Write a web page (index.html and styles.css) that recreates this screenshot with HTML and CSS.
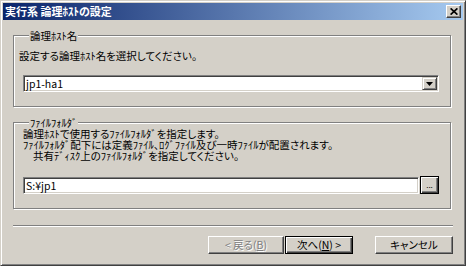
FILE: index.html
```html
<!DOCTYPE html>
<html lang="ja">
<head>
  <meta charset="UTF-8">
  <meta name="viewport" content="width=device-width, initial-scale=1.0">
  <title>実行系 論理ホストの設定</title>
  <link rel="stylesheet" href="styles.css">
</head>
<body>
  <div class="window">
    <div class="titlebar">
      <span class="title">実行系 論理ﾎｽﾄの設定</span>
      <button class="close-btn" aria-label="閉じる">
        <svg width="8" height="7" viewBox="0 0 8 7"><path d="M0.6 0.4L7.4 6.6M7.4 0.4L0.6 6.6" stroke="#000" stroke-width="1.7"/></svg>
      </button>
    </div>

    <div class="content">
      <fieldset class="group group-host">
        <legend>論理ﾎｽﾄ名</legend>
        <p class="desc">設定する論理ﾎｽﾄ名を選択してください。</p>
        <div class="combo">
          <span class="combo-value">jp1-ha1</span>
          <span class="combo-btn">
            <svg width="7" height="4" viewBox="0 0 7 4"><polygon points="0,0 7,0 3.5,4" fill="#000"/></svg>
          </span>
        </div>
      </fieldset>

      <fieldset class="group group-folder">
        <legend>ﾌｧｲﾙﾌｫﾙﾀﾞ</legend>
        <p class="desc">論理ﾎｽﾄで使用するﾌｧｲﾙﾌｫﾙﾀﾞを指定します。<br>ﾌｧｲﾙﾌｫﾙﾀﾞ配下には定義ﾌｧｲﾙ、ﾛｸﾞﾌｧｲﾙ及び一時ﾌｧｲﾙが配置されます。<br><span class="indent">共有ﾃﾞｨｽｸ上のﾌｧｲﾙﾌｫﾙﾀﾞを指定してください。</span></p>
        <div class="path-row">
          <div class="textbox">S:¥jp1</div>
          <button class="browse-btn">...</button>
        </div>
      </fieldset>

      <div class="separator"></div>

      <div class="buttons">
        <button class="btn btn-back" disabled>&lt; 戻る(<u>B</u>)</button>
        <button class="btn btn-next">次へ(<u>N</u>) &gt;</button>
        <button class="btn btn-cancel">キャンセル</button>
      </div>
    </div>
  </div>
</body>
</html>
```

FILE: styles.css
```css
* {
  margin: 0;
  padding: 0;
  box-sizing: border-box;
}

body {
  font-family: "Noto Sans CJK JP", "DejaVu Sans", sans-serif;
  font-size: 10.5px;
  font-feature-settings: "palt" 1;
  color: #000;
  background-color: #d4d0c8;
}

.window {
  width: 466px;
  height: 266px;
  padding: 2px;
  background-color: #d4d0c8;
  border: 1px solid;
  border-color: #d4d0c8 #404040 #404040 #d4d0c8;
  box-shadow: inset 1px 1px 0 #fff, inset -1px -1px 0 #808080;
}

.titlebar {
  height: 17px;
  display: flex;
  align-items: center;
  justify-content: space-between;
  padding: 0 2px 0 2px;
  background: linear-gradient(to right, #0a246a, #a6caf0);
}

.title {
  color: #fff;
  font-size: 11px;
  font-weight: bold;
  line-height: 11px;
}

.close-btn {
  width: 15px;
  height: 13px;
  display: flex;
  align-items: center;
  justify-content: center;
  background-color: #d4d0c8;
  border: 1px solid;
  border-color: #fff #404040 #404040 #fff;
  box-shadow: inset -1px -1px 0 #808080;
}

.close-btn svg {
  display: block;
}

.content {
  padding: 0 10px 0 10px;
}

.group {
  margin-right: 2px;
  border: 1px solid #808080;
  box-shadow: inset 1px 1px 0 #fff, 1px 1px 0 #fff;
}

.group legend {
  margin-left: 6px;
  padding: 0 1px;
  line-height: 11px;
  font-feature-settings: normal;
  background-color: #d4d0c8;
}

.desc {
  line-height: 11px;
}

.group-host {
  margin-top: 10px;
  padding: 0 11px 14px 9px;
}

.group-host .desc {
  margin: 9px 0 0 -4px;
}

.group-folder {
  margin-top: 10px;
  padding: 0 11px 14px 9px;
}

.indent {
  padding-left: 10px;
}

.combo {
  height: 17px;
  margin-top: 14px;
  display: flex;
  align-items: center;
  justify-content: space-between;
  padding: 0 1px 0 2px;
  background-color: #fff;
  border: 1px solid;
  border-color: #808080 #fff #fff #808080;
  box-shadow: inset 1px 1px 0 #404040, inset -1px -1px 0 #d4d0c8;
}

.combo-btn {
  width: 15px;
  height: 13px;
  display: flex;
  align-items: center;
  justify-content: center;
  background-color: #d4d0c8;
  border: 1px solid;
  border-color: #d4d0c8 #404040 #404040 #d4d0c8;
  box-shadow: inset 1px 1px 0 #fff, inset -1px -1px 0 #808080;
}

.path-row {
  margin-top: 15px;
  height: 18px;
  display: flex;
  align-items: center;
  gap: 1px;
}

.textbox {
  flex: 1;
  height: 17px;
  padding: 0 2px;
  line-height: 15px;
  background-color: #fff;
  border: 1px solid;
  border-color: #808080 #fff #fff #808080;
  box-shadow: inset 1px 1px 0 #404040, inset -1px -1px 0 #d4d0c8;
}

.browse-btn {
  width: 19px;
  height: 18px;
  font-family: inherit;
  font-size: 8px;
  line-height: 10px;
  background-color: #d4d0c8;
  border: 1px solid #000;
  box-shadow: inset 1px 1px 0 #fff, inset -1px -1px 0 #404040, inset -2px -2px 0 #808080;
}

.separator {
  height: 2px;
  margin-top: 16px;
  border-top: 1px solid #808080;
  border-bottom: 1px solid #fff;
}

.buttons {
  margin-top: 9px;
  display: flex;
  justify-content: flex-end;
}

.btn {
  height: 18px;
  font-family: inherit;
  font-size: 10.5px;
  font-feature-settings: "palt" 1;
  line-height: 14px;
  color: #000;
  background-color: #d4d0c8;
  border: 1px solid;
  border-color: #fff #404040 #404040 #fff;
  box-shadow: inset -1px -1px 0 #808080;
}

.btn-back {
  width: 76px;
  color: #808080;
  text-shadow: 1px 1px 0 #fff;
}

.btn-next {
  width: 68px;
  margin-left: 1px;
  border-color: #000;
  box-shadow: inset 1px 1px 0 #fff, inset -1px -1px 0 #404040, inset -2px -2px 0 #808080;
}

.btn-cancel {
  width: 78px;
  margin-left: 22px;
}
```
